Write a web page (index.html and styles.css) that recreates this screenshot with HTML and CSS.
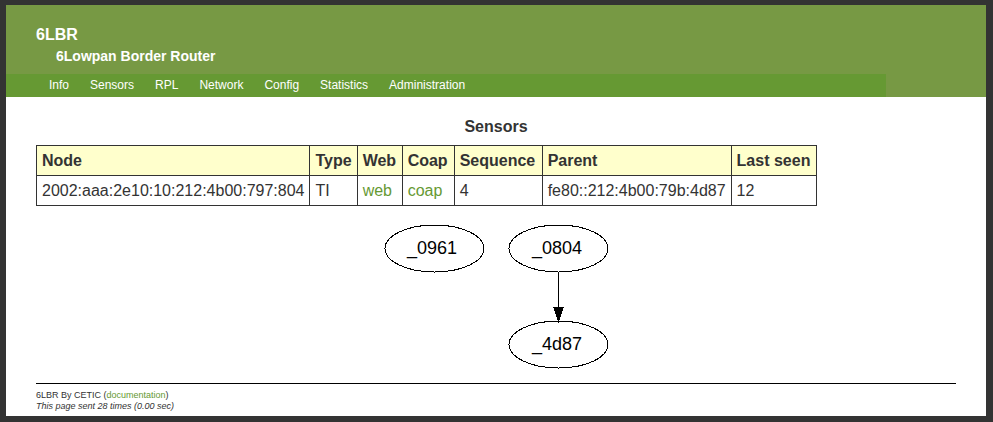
FILE: index.html
```html
<!DOCTYPE html>
<html lang="en">
<head>
<meta charset="utf-8">
<title>6LBR - Sensors</title>
<link rel="stylesheet" href="styles.css">
</head>
<body>
<div class="page">
  <header class="banner">
    <h1 class="title">6LBR</h1>
    <h2 class="subtitle">6Lowpan Border Router</h2>
    <nav class="menu">
      <a href="#">Info</a>
      <a href="#">Sensors</a>
      <a href="#">RPL</a>
      <a href="#">Network</a>
      <a href="#">Config</a>
      <a href="#">Statistics</a>
      <a href="#">Administration</a>
    </nav>
  </header>
  <main class="content">
    <h2 class="heading">Sensors</h2>
    <table class="sensors">
      <colgroup>
        <col><col><col class="col-web"><col class="col-coap"><col class="col-sequence"><col><col class="col-seen">
      </colgroup>
      <thead>
        <tr><th>Node</th><th>Type</th><th>Web</th><th>Coap</th><th>Sequence</th><th>Parent</th><th>Last seen</th></tr>
      </thead>
      <tbody>
        <tr><td>2002:aaa:2e10:10:212:4b00:797:804</td><td>TI</td><td><a href="#">web</a></td><td><a href="#">coap</a></td><td>4</td><td>fe80::212:4b00:79b:4d87</td><td>12</td></tr>
      </tbody>
    </table>
    <svg class="graph" width="232" height="154" viewBox="0 0 232 154" role="img" aria-label="Sensor tree">
      <g class="shapes" shape-rendering="crispEdges">
        <ellipse cx="54.5" cy="28.5" rx="49.5" ry="23.5"/>
        <ellipse cx="178.5" cy="28.5" rx="49.5" ry="23.5"/>
        <ellipse cx="178.5" cy="124.5" rx="49.5" ry="23.5"/>
        <path d="M178.5 52V91"/>
        <path class="arrow" d="M174 87.500H183L178.500 101Z"/>
      </g>
      <g class="labels">
        <text x="52" y="34">_0961</text>
        <text x="177" y="34">_0804</text>
        <text x="177" y="130">_4d87</text>
      </g>
    </svg>
  </main>
  <footer class="footer">
    <p>6LBR By CETIC (<a href="#">documentation</a>)</p>
    <p class="stats">This page sent 28 times (0.00 sec)</p>
  </footer>
</div>
</body>
</html>
```
FILE: styles.css
```css
body {
  margin: 5px 7px 6px 6px;
  background: #333;
  color: #333;
  font-family: "Liberation Sans", Arial, sans-serif;
  font-size: 16px;
}

h1, h2, p {
  margin: 0;
}

a {
  color: #693;
  text-decoration: none;
}

.page {
  background: #fff;
}

.banner {
  padding-top: 20px;
  background: #794;
  color: #fff;
}

.title {
  margin-left: 30px;
  font-size: 16px;
  line-height: 20px;
}

.subtitle {
  margin-left: 50px;
  padding-bottom: 7px;
  font-size: 14px;
  line-height: 22px;
}

.menu {
  display: flex;
  gap: 21px;
  margin-right: 100px;
  padding-left: 43px;
  background: #693;
  font-size: 12px;
  line-height: 23px;
}

.menu a {
  color: #fff;
}

.content {
  padding: 20px 30px 0;
}

.heading {
  margin-bottom: 9px;
  font-size: 16px;
  line-height: 19px;
  text-align: center;
}

.sensors {
  border-collapse: collapse;
  line-height: 19px;
}

.sensors th,
.sensors td {
  padding: 5px;
  border: 1px solid #333;
  text-align: left;
  white-space: nowrap;
}

.sensors th {
  background: #ffc;
}

.col-web {
  width: 45px;
}

.col-coap {
  width: 52px;
}

.col-sequence {
  width: 88px;
}

.col-seen {
  width: 85px;
}

.graph {
  display: block;
  margin: 14px auto 0;
}

.shapes {
  fill: none;
  stroke: #000;
}

.shapes .arrow {
  fill: #000;
}

.labels {
  fill: #000;
  font-size: 18px;
  text-anchor: middle;
}

.footer {
  margin: 9px 30px 0;
  padding: 6px 0 4px;
  border-top: 1px solid #000;
  font-size: 9px;
  line-height: 11px;
}

.stats {
  font-style: italic;
}
```
